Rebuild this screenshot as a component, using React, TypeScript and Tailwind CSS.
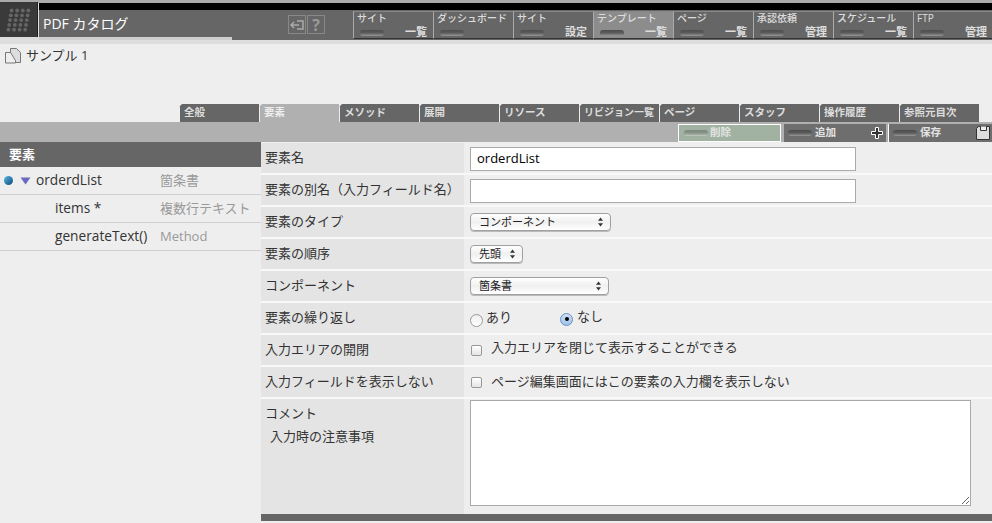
import type { ReactNode } from "react"

const navItems = [
  { top: "サイト", bottom: "一覧" },
  { top: "ダッシュボード", bottom: "" },
  { top: "サイト", bottom: "設定" },
  { top: "テンプレート", bottom: "一覧", active: true },
  { top: "ページ", bottom: "一覧" },
  { top: "承認依頼", bottom: "管理" },
  { top: "スケジュール", bottom: "一覧" },
  { top: "FTP", bottom: "管理" },
]

const tabs = ["全般", "要素", "メソッド", "展開", "リソース", "リビジョン一覧", "ページ", "スタッフ", "操作履歴", "参照元目次"]

const elements = [
  { name: "orderdList", type: "箇条書", root: true },
  { name: "items *", type: "複数行テキスト" },
  { name: "generateText()", type: "Method" },
]

function Pill({ className = "" }: { className?: string }) {
  return <span className={`block h-[6px] w-[24px] rounded-full bg-gradient-to-b from-[#4c4c4c] via-[#5c5c5c] to-[#999] ${className}`} />
}

function Row({ label, children }: { label: ReactNode; children: ReactNode }) {
  return (
    <div className="flex h-[32px] border-b-2 border-[#f8f8f8]">
      <div className="flex w-[203px] items-center bg-[#e4e4e4] pl-[4px] text-[13px] text-[#333]">{label}</div>
      <div className="ml-[2px] flex flex-1 items-center pl-[4px] text-[13px] text-[#333]">{children}</div>
    </div>
  )
}

function FakeSelect({ text, width }: { text: string; width: string }) {
  return (
    <div className={`flex h-[18px] items-center justify-between rounded-[4px] border border-[#a0a0a0] bg-gradient-to-b from-white via-[#f0f0f0] to-white pl-[8px] pr-[6px] text-[11px] text-[#222] shadow-[0_1px_0_#bbb] ${width}`}>
      <span>{text}</span>
      <svg width="7" height="10" viewBox="0 0 7 10" className="fill-[#333]">
        <path d="M3.5 0.5 6 3.8H1zM3.5 9.5 1 6.2h5z" />
      </svg>
    </div>
  )
}

function ActionButton({ label, icon, className = "", pill = "" }: { label: string; icon?: ReactNode; className?: string; pill?: string }) {
  return (
    <div className={`relative flex h-[18px] items-center pl-[4px] text-[10.5px] font-bold text-[#e4e4e4] ${className}`}>
      <Pill className={pill} />
      <span className="ml-[2px]">{label}</span>
      {icon && <span className="absolute right-[2px] top-[2px]">{icon}</span>}
    </div>
  )
}

export default function App() {
  return (
    <div className="h-[523px] w-[992px] overflow-hidden bg-[#eeeeee] font-['Open_Sans','Noto_Sans_CJK_JP',sans-serif]">
      {/* header */}
      <header className="relative h-[44px] bg-[#dddddd]">
        <div className="h-[3px] bg-[#aaaaaa]" />
        <div className="absolute left-[39px] right-0 top-[3px] h-[7px] bg-black" />
        <div className="absolute left-0 top-[2px] flex h-[35px] w-[38px] items-center justify-center border-r border-[#222] bg-[#3a3a3a]">
          <svg width="28" height="26" viewBox="0 0 28 26" className="fill-[#666]">
            {[0, 1, 2, 3, 4].map((r) =>
              [0, 1, 2, 3].map((c) => <circle key={`${r}-${c}`} cx={5 + c * 5.6 + (2 - r) * 0.8} cy={3.5 + r * 4.8} r="1.9" />),
            )}
          </svg>
        </div>
        <div className="absolute left-[39px] right-0 top-[10px] flex h-[30px] bg-[#666666]">
          <div className="ml-[4px] flex h-[26px] w-[190px] items-center text-[14px] font-normal text-white">PDF カタログ</div>
          <div className="ml-[55px] mt-[5px] flex h-[19px] gap-[1px]">
            <span className="flex w-[18px] items-center justify-center border border-[#888]">
              <svg width="14" height="10" viewBox="0 0 14 10" className="fill-none stroke-[#aaa]" strokeWidth="1.5">
                <path d="M1 5h8M4 2 1 5l3 3M7 1h6v8H7" />
              </svg>
            </span>
            <span className="flex w-[18px] items-center justify-center border border-[#888] text-[16px] font-bold leading-none text-[#999]">?</span>
          </div>
          <nav className="absolute left-[314px] top-[1px] flex">
            {navItems.map((item, i) => (
              <div
                key={i}
                className={`relative h-[28px] w-[80px] border-b border-l border-t border-b-[#333] border-l-[#aaa] border-t-[#888] ${item.active ? "bg-[#8c8c8c]" : "bg-[#666666]"}`}
              >
                <span className="absolute left-[3px] top-[-1px] whitespace-nowrap text-[10px] font-medium leading-[14px] text-[#ddd]">{item.top}</span>
                <Pill className="absolute left-[6px] top-[18px]" />
                <span className="absolute right-[6px] top-[13px] text-[11px] font-bold leading-[13px] text-[#ddd]">{item.bottom}</span>
              </div>
            ))}
          </nav>
        </div>
        <div className="absolute left-[39px] top-[37px] h-[3px] w-[193px] bg-[#cfcfcf]" />
      </header>

      {/* page title */}
      <div className="flex h-[60px] items-start pl-[5px] pt-[2px]">
        <svg width="16" height="16" viewBox="0 0 16 16" className="mt-[2px] fill-[#ddd] stroke-[#777]">
          <path d="M5.5 .5h6l4 4v10h-10z" />
          <path d="M.5 4.5h5l5 8v2.5h-10z" fill="#eee" />
        </svg>
        <span className="ml-[5px] text-[13px] text-[#333]">サンプル 1</span>
      </div>

      {/* tabs */}
      <div className="flex h-[18px] pl-[179px]">
        {tabs.map((t, i) => (
          <div
            key={t}
            className={`h-[18px] w-[80px] border-l border-[#eee] pl-[4px] font-bold leading-[17px] [clip-path:polygon(3px_0,100%_0,100%_100%,0_100%,0_3px)] ${i === 5 ? "text-[10px]" : "text-[10.5px]"} ${i === 1 ? "bg-[#b0b0b0] text-[#eee]" : "bg-[#666666] text-[#ddd]"}`}
          >
            {t}
          </div>
        ))}
      </div>

      {/* action bar */}
      <div className="flex h-[20px] items-start justify-end bg-[#b0b0b0] pt-[2px]">
        <ActionButton label="削除" className="w-[103px] border border-white bg-[#a2b2a2] pl-[5px]" pill="from-[#7c887c] via-[#889488] to-[#c0ccc0]" />
        <div className="w-[3px]" />
        <ActionButton
          label="追加"
          className="w-[102px] gap-[1px] bg-[#6e6e6e]"
          icon={
            <svg width="14" height="14" viewBox="0 0 14 14" className="fill-[#333] stroke-white" strokeWidth="1">
              <path d="M5.5 1.5h3v4h4v3h-4v4h-3v-4h-4v-3h4z" />
            </svg>
          }
        />
        <div className="w-[2px]" />
        <div className="h-[18px] w-[1px] bg-white" />
        <ActionButton
          label="保存"
          className="w-[103px] gap-[1px] bg-[#6e6e6e]"
          icon={
            <svg width="14" height="14" viewBox="0 0 14 14" className="fill-[#ddd] stroke-[#333]">
              <path d="M2.5.5h11v13H.5V2.5z" />
              <path d="M4.5.5v4h6v-4" fill="#eee" />
            </svg>
          }
        />
      </div>

      <div className="flex">
        {/* element list */}
        <aside className="w-[261px]">
          <div className="flex h-[25px] items-center bg-[#666666] pl-[9px] text-[13px] font-bold text-white">要素</div>
          {elements.map((el) => (
            <div key={el.name} className="flex h-[28px] items-center border-b border-[#cfcfcf] text-[13px]">
              <span className="flex w-[36px] items-center pl-[4px]">
                {el.root && (
                  <>
                    <span className="h-[9px] w-[9px] rounded-full bg-gradient-to-br from-[#5ab8ec] to-[#0d4a78]" />
                    <svg width="11" height="8" viewBox="0 0 11 8" className="ml-[7px]">
                      <path d="M0.5 0.5h10L5.5 7.5z" fill="#6a6ac0" />
                    </svg>
                  </>
                )}
              </span>
              <span className={`w-[124px] text-[13.7px] text-[#333] ${el.root ? "" : "pl-[19px]"}`}>{el.name}</span>
              <span className="text-[#999]">{el.type}</span>
            </div>
          ))}
        </aside>

        {/* form */}
        <main className="flex-1 pt-[1px]">
          <Row label="要素名">
            <div className="mt-[1px] flex h-[24px] w-[386px] items-center border border-[#aaa] bg-white pl-[6px] text-[13px] text-black">orderdList</div>
          </Row>
          <Row label="要素の別名（入力フィールド名）">
            <div className="mt-[1px] h-[24px] w-[386px] border border-[#aaa] bg-white" />
          </Row>
          <Row label="要素のタイプ">
            <FakeSelect text="コンポーネント" width="w-[141px]" />
          </Row>
          <Row label="要素の順序">
            <FakeSelect text="先頭" width="w-[53px]" />
          </Row>
          <Row label="コンポーネント">
            <FakeSelect text="箇条書" width="w-[139px]" />
          </Row>
          <Row label="要素の繰り返し">
            <span className="mt-[4px] h-[13px] w-[13px] rounded-full border border-[#999] bg-gradient-to-b from-[#eee] to-white" />
            <span className="ml-[3px]">あり</span>
            <span className="ml-[48px] mt-[2px] flex h-[13px] w-[13px] items-center justify-center rounded-full border border-[#6a8fc0] bg-gradient-to-b from-[#cfe0f5] to-[#9fc3ea]">
              <span className="h-[4px] w-[4px] rounded-full bg-black" />
            </span>
            <span className="mb-[2px] ml-[4px]">なし</span>
          </Row>
          <Row label="入力エリアの開閉">
            <span className="ml-[1px] h-[11px] w-[11px] rounded-[2px] border border-[#999] bg-gradient-to-b from-white to-[#e4e4e4]" />
            <span className="mb-[4px] ml-[9px]">入力エリアを閉じて表示することができる</span>
          </Row>
          <Row label="入力フィールドを表示しない">
            <span className="ml-[1px] h-[11px] w-[11px] rounded-[2px] border border-[#999] bg-gradient-to-b from-white to-[#e4e4e4]" />
            <span className="ml-[9px]">ページ編集画面にはこの要素の入力欄を表示しない</span>
          </Row>
          <div className="flex h-[115px]">
            <div className="w-[203px] bg-[#e4e4e4] pl-[4px] pt-[4px] text-[13px] leading-[20px] text-[#333]">
              コメント
              <div className="mt-[3px] pl-[5px]">入力時の注意事項</div>
            </div>
            <div className="ml-[2px] flex-1 pl-[4px] pt-[1px]">
              <textarea className="block h-[106px] w-[501px] border border-[#aaa] bg-white" />
            </div>
          </div>
          <div className="h-[7px] bg-[#666666]" />
        </main>
      </div>
    </div>
  )
}
